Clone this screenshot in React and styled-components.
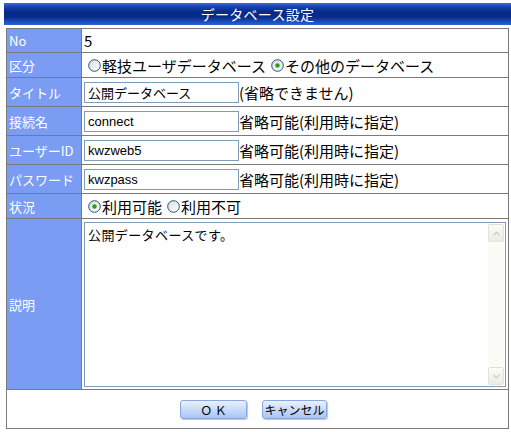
import React, { useState } from "react";
import styled, { createGlobalStyle } from "styled-components";
import { ChevronUp, ChevronDown } from "lucide-react";

const GlobalStyle = createGlobalStyle`
  html, body {
    margin: 0;
    padding: 0;
    background: #ffffff;
  }
  body {
    font-family: "Noto Sans CJK JP", "DejaVu Sans", sans-serif;
    color: #000;
  }
`;

const fields = [
  { label: "タイトル", value: "公開データベース", note: "(省略できません)" },
  { label: "接続名", value: "connect", note: "省略可能(利用時に指定)" },
  { label: "ユーザーID", value: "kwzweb5", note: "省略可能(利用時に指定)" },
  { label: "パスワード", value: "kwzpass", note: "省略可能(利用時に指定)" },
];

function Radio({ checked }) {
  return (
    <svg width="13" height="13" viewBox="0 0 13 13">
      <defs>
        <linearGradient id={checked ? "rg1" : "rg0"} x1="0" y1="0" x2="1" y2="1">
          <stop offset="0" stopColor="#dcdcd6" />
          <stop offset="1" stopColor="#ffffff" />
        </linearGradient>
      </defs>
      <circle cx="6.5" cy="6.5" r="5.8" fill={`url(#${checked ? "rg1" : "rg0"})`} stroke="#1c5180" strokeWidth="1" />
      {checked && <circle cx="6.5" cy="6.5" r="2.2" fill="#21a121" />}
    </svg>
  );
}

export default function App() {
  const [kind, setKind] = useState(1);
  const [status, setStatus] = useState(0);

  return (
    <Page>
      <GlobalStyle />
      <Header>データベース設定</Header>
      <Table>
        <tbody>
          <Row $h={24}>
            <Label>No</Label>
            <Value>5</Value>
          </Row>
          <Row $h={25}>
            <Label>区分</Label>
            <Value>
              <Choice onClick={() => setKind(0)}>
                <Radio checked={kind === 0} />
                軽技ユーザデータベース
              </Choice>
              <Choice onClick={() => setKind(1)}>
                <Radio checked={kind === 1} />
                その他のデータベース
              </Choice>
            </Value>
          </Row>
          {fields.map((f) => (
            <Row $h={29} key={f.label}>
              <Label>{f.label}</Label>
              <Value>
                <Inline>
                  <TextInput defaultValue={f.value} $jp={f.label === "タイトル"} />
                  <Note>{f.note}</Note>
                </Inline>
              </Value>
            </Row>
          ))}
          <Row $h={25}>
            <Label>状況</Label>
            <Value>
              <Choice onClick={() => setStatus(0)}>
                <Radio checked={status === 0} />
                利用可能
              </Choice>
              <Choice onClick={() => setStatus(1)}>
                <Radio checked={status === 1} />
                利用不可
              </Choice>
            </Value>
          </Row>
          <Row $h={171}>
            <Label>説明</Label>
            <AreaCell>
              <AreaBox>
                <Area defaultValue="公開データベースです。" />
                <Scroll>
                  <ScrollBtn>
                    <ChevronUp size={11} strokeWidth={2.5} />
                  </ScrollBtn>
                  <Track />
                  <ScrollBtn>
                    <ChevronDown size={11} strokeWidth={2.5} />
                  </ScrollBtn>
                </Scroll>
              </AreaBox>
            </AreaCell>
          </Row>
          <Row $h={39}>
            <ButtonCell colSpan={2}>
              <Buttons>
                <Button $w={67}>Ｏ Ｋ</Button>
                <Button $w={65}>キャンセル</Button>
              </Buttons>
            </ButtonCell>
          </Row>
        </tbody>
      </Table>
    </Page>
  );
}

const Page = styled.div`
  width: 511px;
  padding: 3px 0 0 4px;
  box-sizing: border-box;
`;

const Header = styled.div`
  height: 22px;
  width: 507px;
  display: flex;
  align-items: center;
  justify-content: center;
  color: #ffffff;
  font-size: 14px;
  letter-spacing: 0.3px;
  background: linear-gradient(
    to bottom,
    #3a6cdc 0%,
    #1a46b4 15%,
    #062a86 40%,
    #082c8a 65%,
    #1c4cbc 85%,
    #2f62d4 100%
  );
`;

const Table = styled.table`
  margin: 3px 0 0 2px;
  width: 503px;
  border-collapse: collapse;
  border: 1px solid #7a7a7a;
`;

const Row = styled.tr`
  height: ${(p) => p.$h}px;
  & > td {
    border-top: 1px solid #7a7a7a;
    border-bottom: 1px solid #7a7a7a;
  }
`;

const Label = styled.td`
  width: 72px;
  padding: 0 0 0 2px;
  background: #7a9cf2;
  color: #ffffff;
  font-size: 13px;
  white-space: nowrap;
  vertical-align: middle;
  border-right: 1px solid #7a7a7a;
`;

const Value = styled.td`
  padding: 0 0 0 2px;
  font-size: 15px;
  white-space: nowrap;
  vertical-align: middle;
`;

const Choice = styled.label`
  display: inline-flex;
  align-items: center;
  gap: 1px;
  margin-left: 4px;
  margin-right: 1px;
  cursor: pointer;
  & > svg {
    flex: none;
  }
`;

const Inline = styled.div`
  display: flex;
  align-items: center;
`;

const TextInput = styled.input`
  box-sizing: border-box;
  width: 155px;
  height: 21px;
  margin: 0;
  padding: 0 3px;
  border: 1px solid #7f9db9;
  font-family: ${(p) =>
    p.$jp ? `"Noto Sans CJK JP", sans-serif` : `"Liberation Sans", Arial, sans-serif`};
  font-size: 13px;
  color: #000;
  outline: none;
`;

const Note = styled.span`
  font-size: 15px;
`;

const AreaCell = styled.td`
  padding: 3px 0 2px 2px;
  vertical-align: top;
`;

const AreaBox = styled.div`
  width: 422px;
  height: 165px;
  box-sizing: border-box;
  border: 1px solid #7f9db9;
  display: flex;
  background: #fff;
`;

const Area = styled.textarea`
  flex: 1;
  border: none;
  outline: none;
  resize: none;
  margin: 0;
  padding: 2px 3px;
  font-family: "Noto Sans CJK JP", sans-serif;
  font-size: 13px;
  letter-spacing: 0.4px;
  color: #000;
  overflow: hidden;
`;

const Scroll = styled.div`
  width: 17px;
  display: flex;
  flex-direction: column;
  padding: 1px 1px 1px 0;
  box-sizing: border-box;
`;

const ScrollBtn = styled.div`
  height: 16px;
  display: flex;
  align-items: center;
  justify-content: center;
  border: 1px solid #e2e2dc;
  border-radius: 2px;
  background: linear-gradient(to bottom, #fbfbf8, #ecebe4);
  color: #c8c8c0;
`;

const Track = styled.div`
  flex: 1;
  background-color: #fbfbf8;
  background-image: radial-gradient(#ecece6 0.6px, transparent 0.7px);
  background-size: 2px 2px;
`;

const ButtonCell = styled.td`
  vertical-align: middle;
  padding: 0;
`;

const Buttons = styled.div`
  display: flex;
  justify-content: center;
  gap: 15px;
  padding-right: 8px;
`;

const Button = styled.button`
  width: ${(p) => p.$w}px;
  height: 19px;
  margin: 0;
  padding: 0;
  border: 1px solid #8aa8e0;
  border-radius: 3px;
  background: linear-gradient(to bottom, #eaf1fd 0%, #c9dbfa 50%, #a9c4f4 100%);
  box-shadow: 1px 1px 1px rgba(120, 140, 180, 0.5);
  font-family: "Noto Sans CJK JP", sans-serif;
  font-size: 12px;
  line-height: 17px;
  white-space: nowrap;
  color: #000;
  cursor: pointer;
`;
